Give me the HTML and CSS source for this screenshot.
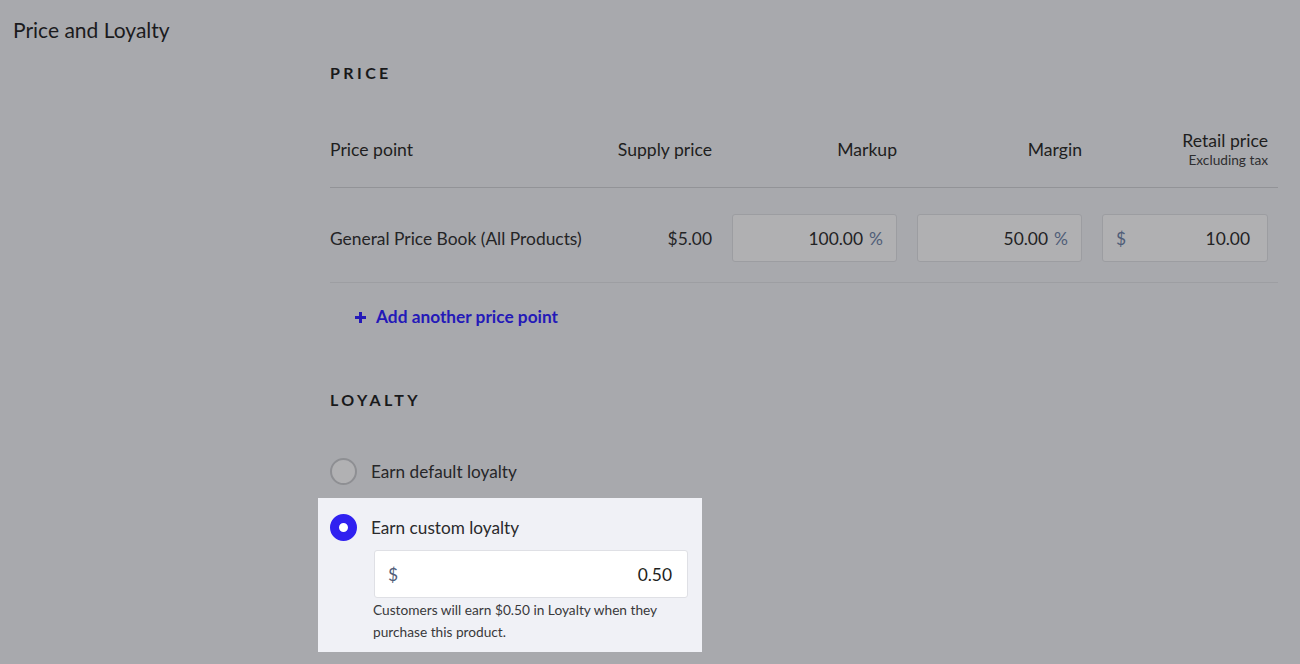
FILE: index.html
```html
<!DOCTYPE html>
<html>
<head>
<meta charset="utf-8">
<link rel="stylesheet" href="styles.css">
</head>
<body>
<div class="page">
  <h1 class="title">Price and Loyalty</h1>
  <div class="content">
    <h2 class="section-head">PRICE</h2>
    <div class="grid header">
      <div class="cell left">Price point</div>
      <div class="cell right">Supply price</div>
      <div class="cell right">Markup</div>
      <div class="cell right">Margin</div>
      <div class="cell right stack"><span>Retail price</span><span class="sub">Excluding tax</span></div>
    </div>
    <div class="grid row">
      <div class="cell left nowrap">General Price Book (All Products)</div>
      <div class="cell right">$5.00</div>
      <div class="field"><span class="val">100.00</span><span class="unit">%</span></div>
      <div class="field"><span class="val">50.00</span><span class="unit">%</span></div>
      <div class="field split"><span class="unit">$</span><span class="val">10.00</span></div>
    </div>
    <a class="add-link"><span class="plus">
      <svg width="13" height="13" viewBox="0 0 13 13"><path d="M6.5 1v11M1 6.5h11" stroke="currentColor" stroke-width="3"/></svg>
    </span>Add another price point</a>

    <h2 class="section-head loyalty-head">LOYALTY</h2>
    <label class="radio-row first">
      <span class="radio"></span>
      <span class="radio-label">Earn default loyalty</span>
    </label>
    <div class="spot">
      <label class="radio-row">
        <span class="radio checked"></span>
        <span class="radio-label">Earn custom loyalty</span>
      </label>
      <div class="loyalty-field"><span class="unit">$</span><span class="val">0.50</span></div>
      <p class="help">Customers will earn $0.50 in Loyalty when they<br>purchase this product.</p>
    </div>
  </div>
</div>
</body>
</html>
```

FILE: styles.css
```css
html, body {
  margin: 0;
  padding: 0;
  background: #a8a9ad;
  font-family: Lato, "Open Sans", sans-serif;
  color: #202022;
}
.page {
  padding: 18px 0 0 13px;
}
.title {
  margin: 0;
  font-size: 21px;
  line-height: 24px;
  font-weight: 400;
  color: #1b1b1d;
}
.content {
  margin-left: 317px;
  width: 948px;
}
.section-head {
  margin: 21px 0 0;
  font-size: 16px;
  line-height: 20px;
  font-weight: 700;
  letter-spacing: 3.4px;
  color: #19191b;
}
.grid {
  display: grid;
  grid-template-columns: minmax(0, 1fr) 165px 165px 165px 166px;
  column-gap: 20px;
  padding-right: 10px;
  align-items: center;
}
.header {
  padding: 48px 10px 19px 0;
  border-bottom: 1px solid #929397;
  font-size: 17.6px;
  line-height: 20px;
  color: #1e1e20;
}
.row {
  padding: 26px 10px 20px 0;
  border-bottom: 1px solid #9d9ea2;
  font-size: 17.4px;
  color: #242426;
}
.nowrap { white-space: nowrap; }
.cell.left { text-align: left; }
.cell.right { text-align: right; }
.stack {
  display: flex;
  flex-direction: column;
  align-items: flex-end;
}
.sub {
  font-size: 13.7px;
  line-height: 17px;
  color: #2e2e30;
}
.field {
  height: 46px;
  border: 1px solid #9c9da1;
  border-radius: 3px;
  background: #b0b0b2;
  display: flex;
  align-items: center;
  justify-content: flex-end;
  gap: 6px;
  padding: 0 13px;
  font-size: 17.4px;
  color: #222224;
}
.field.split {
  justify-content: space-between;
  padding: 0 17px 0 13px;
}
.unit {
  color: #4f5d78;
}
.add-link {
  display: flex;
  align-items: center;
  margin-top: 24px;
  padding-left: 24px;
  font-size: 17.3px;
  line-height: 20px;
  font-weight: 700;
  color: #2419b8;
}
.plus {
  display: flex;
  margin-right: 9px;
}
.loyalty-head {
  margin-top: 63px;
}
.radio-row {
  display: flex;
  align-items: center;
  height: 26px;
}
.radio-row.first {
  margin-top: 48px;
}
.radio {
  box-sizing: border-box;
  width: 27px;
  height: 27px;
  border-radius: 50%;
  border: 2px solid #8e8f93;
  background: #b1b1b3;
}
.radio.checked {
  border: 9.5px solid #3021f0;
  background: #ffffff;
}
.radio-label {
  margin-left: 14px;
  font-size: 17.2px;
  color: #262628;
}
.spot {
  margin: 14px 0 0 -12px;
  width: 384px;
  box-sizing: border-box;
  padding: 16px 14px 9px 12px;
  background: #f0f1f6;
}
.spot .radio-label {
  color: #2a2a2c;
}
.loyalty-field {
  margin: 10px 0 0 44px;
  height: 46px;
  border: 1px solid #dfe0e5;
  border-radius: 3px;
  background: #ffffff;
  display: flex;
  align-items: center;
  justify-content: space-between;
  padding: 0 15px 0 13px;
  font-size: 17.4px;
  color: #1e1e20;
}
.help {
  margin: 1px 0 0 43px;
  font-size: 13.7px;
  line-height: 22px;
  color: #39393b;
}
```
